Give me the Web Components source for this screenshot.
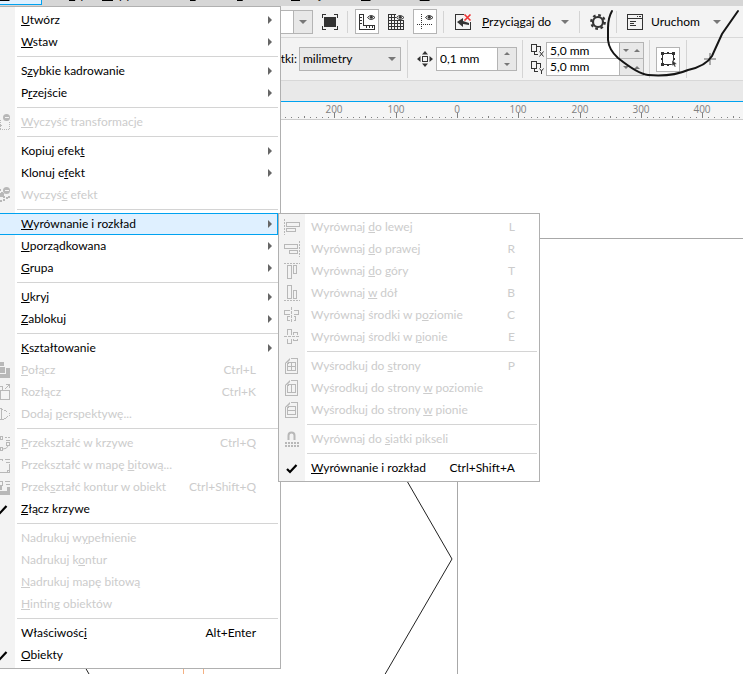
<!DOCTYPE html>
<html lang="pl">
<head>
<meta charset="utf-8">
<title>Wyrównanie i rozkład</title>
<style>
html, body { margin: 0; height: 100%; }
body { font: 12px/16px Lato, "Open Sans", "Noto Sans", sans-serif; color: #000; background: #fff; overflow: hidden; }
</style>
</head>
<body>
<app-window>
  <menu-bar slot="bars">
    <button class="open"><u>O</u>biekt</button><button style="width:50px">Efe<u>k</u>ty</button><button style="width:88px"><u>M</u>apy bitowe</button><button style="width:47px"><u>T</u>ekst</button><button style="width:54px"><u>T</u>abela</button><button style="width:70px"><u>N</u>arzędzia</button><button style="width:45px"><u>O</u>kno</button><button>Po<u>m</u>oc</button>
  </menu-bar>
  <standard-bar slot="bars"></standard-bar>
  <property-bar slot="bars"></property-bar>
  <tab-strip slot="bars"></tab-strip>
  <page-ruler slot="bars"></page-ruler>
  <drawing-area slot="page"></drawing-area>
  <drop-menu slot="menu">
    <menu-item arrow><u>U</u>twórz</menu-item>
    <menu-item arrow><u>W</u>staw</menu-item>
    <menu-line></menu-line>
    <menu-item arrow>S<u>z</u>ybkie kadrowanie</menu-item>
    <menu-item arrow>P<u>r</u>zejście</menu-item>
    <menu-line></menu-line>
    <menu-item off icon="clearTransform"><u>W</u>yczyść transformacje</menu-item>
    <menu-line></menu-line>
    <menu-item arrow>Kopiuj efek<u>t</u></menu-item>
    <menu-item arrow>Klonuj e<u>f</u>ekt</menu-item>
    <menu-item off icon="clearEffect">Wyczyś<u>ć</u> efekt</menu-item>
    <menu-line></menu-line>
    <menu-item arrow active><u>W</u>yrównanie i rozkład
      <drop-menu slot="submenu">
        <menu-item off icon="alignLeft" key="L">Wyrównaj <u>d</u>o lewej</menu-item>
        <menu-item off icon="alignRight" key="R">Wyrównaj <u>d</u>o prawej</menu-item>
        <menu-item off icon="alignTop" key="T">Wyrównaj <u>d</u>o góry</menu-item>
        <menu-item off icon="alignBottom" key="B">Wyrównaj <u>w</u> dół</menu-item>
        <menu-item off icon="centerH" key="C">Wyrównaj środki w p<u>o</u>ziomie</menu-item>
        <menu-item off icon="centerV" key="E">Wyrównaj środki w <u>p</u>ionie</menu-item>
        <menu-line></menu-line>
        <menu-item off icon="page" key="P">Wyśrodkuj do <u>s</u>trony</menu-item>
        <menu-item off icon="pageH">Wyśrodkuj do strony <u>w</u> poziomie</menu-item>
        <menu-item off icon="pageV">Wyśrodkuj do strony <u>w</u> pionie</menu-item>
        <menu-line></menu-line>
        <menu-item off icon="magnet">Wyrównaj do <u>s</u>iatki pikseli</menu-item>
        <menu-line></menu-line>
        <menu-item icon="check" key="Ctrl+Shift+A"><u>W</u>yrównanie i rozkład</menu-item>
      </drop-menu>
    </menu-item>
    <menu-item arrow><u>U</u>porządkowana</menu-item>
    <menu-item arrow><u>G</u>rupa</menu-item>
    <menu-line></menu-line>
    <menu-item arrow><u>U</u>kryj</menu-item>
    <menu-item arrow><u>Z</u>ablokuj</menu-item>
    <menu-line></menu-line>
    <menu-item arrow><u>K</u>ształtowanie</menu-item>
    <menu-item off icon="combine" key="Ctrl+L"><u>P</u>ołącz</menu-item>
    <menu-item off icon="split" key="Ctrl+K">Rozłącz</menu-item>
    <menu-item off icon="perspective">Dodaj <u>p</u>erspektywę...</menu-item>
    <menu-line></menu-line>
    <menu-item off icon="toCurve" key="Ctrl+Q"><u>P</u>rzekształć w krzywe</menu-item>
    <menu-item off icon="toBitmap">Przekształć w mapę <u>b</u>itową...</menu-item>
    <menu-item off icon="toObject" key="Ctrl+Shift+Q">Przek<u>s</u>ztałć kontur w obiekt</menu-item>
    <menu-item icon="check"><u>Z</u>łącz krzywe</menu-item>
    <menu-line></menu-line>
    <menu-item off>Nadrukuj w<u>y</u>pełnienie</menu-item>
    <menu-item off>Nadrukuj k<u>o</u>ntur</menu-item>
    <menu-item off><u>N</u>adrukuj mapę bitową</menu-item>
    <menu-item off><u>H</u>inting obiektów</menu-item>
    <menu-line></menu-line>
    <menu-item key="Alt+Enter">Właściwośc<u>i</u></menu-item>
    <menu-item icon="check"><u>O</u>biekty</menu-item>
  </drop-menu>
  <pen-mark slot="menu"></pen-mark>
</app-window>
<script>
const line = (d, extra = '') => `<path d="${d}" ${extra}/>`;
const eye = '<g shape-rendering="auto"><path d="M8.500 3.500q3.500-4 7.500 0q-4 4-7.500 0z" fill="#fff"/><circle cx="12.300" cy="3.300" r="1.500" fill="currentColor" stroke="none"/></g>';
const fold = '<path d="M1 5L6 0V2L3 5z" fill="currentColor" stroke="none" shape-rendering="auto"/>';
const pageBox = line('M1.500 4.500V15.500H13.500V.5H6.500M5.500 4.500H11.500V12.500H3.500V5.500z');
const ICONS = {
  alignLeft: line('M.5 0V16', 'stroke-dasharray="2 1"') + line('M2.500 3.500h13v4h-13zM2.500 9.500h9v3h-9z'),
  alignRight: line('M15.500 0V16', 'stroke-dasharray="2 1"') + line('M.5 3.500h13v4H.5zM5.500 9.500h8v3h-8z'),
  alignTop: line('M0 .5H16', 'stroke-dasharray="2 1"') + line('M3.500 2.500h4v13h-4zM9.500 2.500h3v8h-3z'),
  alignBottom: line('M0 15.500H16', 'stroke-dasharray="2 1"') + line('M3.500 .5h4v13h-4zM9.500 5.500h3v8h-3z'),
  centerH: line('M7.500 0V16', 'stroke-dasharray="3 1"') + line('M5.500 3.500H.5v4H5.500M9.500 3.500H14.500v4H9.500M5.500 9.500H3.500v4H5.500M9.500 9.500H11.500v4H9.500'),
  centerV: line('M0 7.500H16', 'stroke-dasharray="3 1"') + line('M3.500 5.500V.5h4V5.500M3.500 9.500V14.500h4V9.500M9.500 5.500V3.500h4V5.500M9.500 9.500V11.500h4V9.500'),
  page: pageBox + fold + line('M7.500 4V13M4 8.500H12'),
  pageH: pageBox + fold + line('M7.500 4V13'),
  pageV: pageBox + fold + line('M4 8.500H12'),
  magnet: line('M4.500 9V4.500a3 3 0 0 1 6 0V9', 'stroke-width="2" shape-rendering="auto"') + line('M1 11.500H15M1 14.500H15', 'stroke-width="2" stroke-dasharray="2 1"'),
  check: line('M3 9l3 3L12.500 5', 'stroke-width="2.200" shape-rendering="auto"'),
  clearTransform: '<circle cx="12.500" cy="3.500" r="3.500" fill="currentColor" stroke="none" shape-rendering="auto"/>' + line('M10.500 3.500h4', 'stroke="#f3f3f3"') + line('M0 6.500H6.500V15.500M15.500 8V15.500H6', 'stroke-dasharray="1 1"') + line('M6 11.500h2'),
  clearEffect: line('M6 2v3M6 8v2M8 5v4M10 9v6M13 10v3M7 13v3M15 9v2', 'stroke-width="2" stroke-dasharray="2 1"') + '<circle cx="12.500" cy="3.500" r="3.500" fill="currentColor" stroke="none" shape-rendering="auto"/><circle cx="8" cy="8" r="2.500" fill="currentColor" stroke="none"/>' + line('M10.500 3.500h4', 'stroke="#f3f3f3"'),
  combine: '<path d="M4 0h6v4H4zM4 5h7v6H4zM12 6h4v10H0v-4h12z" fill="currentColor" stroke="none"/>',
  split: line('M0 2.500H8.500V6M6.500 6.500V15.500H15.500V6.500zM0 11.500h6') + line('M11 5l4-4M12 .5h3.500V4'),
  perspective: line('M0 2.500H7.500V13.500H0') + line('M8 3l7 4V10L8 14', 'stroke-dasharray="1.500 1"'),
  toCurve: line('M6.500 1.500h2v3h-2zM12.500 7.500h3v3h-3zM6.500 12.500h2v3h-2z') + line('M14 11q-1 3-5 3M11 2.500h2M14 2.500h2M12 5.500h4', 'shape-rendering="auto"'),
  toBitmap: line('M6 2.500h2.500V4M6 15.500H15.500V7M11 2.500h5M12 5.500h4M13 15.500v-2h2'),
  toObject: line('M6 2.500h2.500V7M11 2.500h5M12 5.500h4') + '<path d="M6 12h6l1-1V8h3v8H6zM6 6h2v5H6z" fill="currentColor" stroke="none"/>',
  fullscreen: line('M.5 4V.5H4M12 .5H15.500V4M15.500 12V15.500H12M4 15.500H.5V12') + '<path d="M2 3h12v10H2z" fill="currentColor" stroke="none"/>',
  rulers: line('M.5 0V15.500H15.500V11.500H4.500V.5H1M1 3.500h2M1 6.500h2M1 9.500h2M7.500 12v2M10.500 12v2M13.500 12v2') + eye,
  grid: line('M.5 .5V15.500H15.500V.5zM3.500 0V16M6.500 0V16M9.500 0V16M12.500 0V16M0 3.500H16M0 6.500H16M0 9.500H16M0 12.500H16') + '<path d="M8 0h8v6H8z" fill="#f3f3f3" stroke="none"/>' + eye,
  guides: line('M4.500 0V16M0 10.500H16', 'stroke-dasharray="1 1"') + eye,
  snapOff: line('M9 .5H.5V15.500H15.500V8') + '<path d="M2 8l6-4v3l6 2v2l-6-1v3z" fill="currentColor" stroke="none" shape-rendering="auto"/>' + line('M9.500 .5l6 6M15.500 .5l-6 6', 'stroke="#e33" stroke-width="1.600" shape-rendering="auto"'),
  gear: '<g shape-rendering="auto"><circle cx="8" cy="8" r="5" stroke-width="2.200"/><circle cx="8" cy="8" r="6.800" stroke-width="2.200" stroke-dasharray="2.700 2.640"/></g>',
  launch: line('M.5 .5h15v15H.5zM0 4.500H16M3 7.500h6M3 9.500h4M3 11.500h6') + '<path d="M0 0h16v1H0zM10 2h1v1h-1zM12 2h2v1h-2z" fill="currentColor" stroke="none"/>',
  nudge: '<g fill="currentColor" stroke="none" shape-rendering="auto"><path d="M8 0l3 3.500H5zM8 16l3-3.500H5zM0 8l3.500-3v6zM16 8l-3.500-3v6z"/></g>' + line('M5.500 5.500h5v5h-5z', 'stroke-width="1.500"'),
  dupX: line('M.5 1.500h5v7h-5zM5.500 3.500H9.500v4M3.500 9v2.500H7') + line('M8.500 8.500l4 5M12.500 8.500l-4 5', 'shape-rendering="auto"'),
  dupY: line('M.5 1.500h5v7h-5zM5.500 3.500H9.500v4M3.500 9v2.500H7') + line('M8.500 8.500l2 2.500 2-2.500M10.500 11v3', 'shape-rendering="auto"'),
  bounds: line('M2.500 2.500h11v11h-11z', 'stroke-width="1"') + '<path d="M1 1h3v3H1zM12 1h3v3h-3zM1 12h3v3H1zM7 1h2v2H7zM7 13h2v2H7zM1 7h2v2H1zM13 7h2v2h-2z" fill="currentColor" stroke="none"/><path d="M12 9l5 4-2 .5 1 2.500h-1.500l-1-2-1.500 1z" fill="currentColor" stroke="#fff" stroke-width=".5" shape-rendering="auto"/>',
  plus: line('M8 2V14M2 8H14', 'stroke="#aaa" stroke-width="2"')
};

const define = (tag, css, html, setup) => {
  const t = document.createElement('template');
  t.innerHTML = `<style>*,:host{box-sizing:border-box}:host([hidden]){display:none}${css}</style>${html}`;
  customElements.define(tag, class extends HTMLElement {
    constructor() {
      super();
      this.attachShadow({ mode: 'open' }).append(t.content.cloneNode(true));
    }
    connectedCallback() {
      if (setup && !this.ready) { this.ready = true; setup(this, this.shadowRoot); }
    }
  });
};

define('ui-icon', ':host{display:block;flex:none;width:16px;height:16px}svg{display:block;overflow:visible}',
  '<svg width="16" height="16" viewBox="0 0 16 16" fill="none" stroke="currentColor" shape-rendering="crispEdges" aria-hidden="true"></svg>',
  (el, root) => { root.querySelector('svg').innerHTML = ICONS[el.getAttribute('name')] || ''; });

define('app-window', `
  :host{display:flex;flex-direction:column;position:relative;min-height:100vh;overflow:hidden;background:#fff}
  header{display:flex;flex-direction:column}
  main{flex:1;display:flex}
`, '<header><slot name="bars"></slot></header><main><slot name="page"></slot></main><slot name="menu"></slot>');

define('menu-bar', `
  :host{display:flex;align-items:flex-end;height:6px;padding-bottom:3px;overflow:hidden;background:#d6d6d6}
  ::slotted(button){font:inherit;line-height:16px;flex:none;border:0;padding:0;margin:0;background:none;text-align:left}
  ::slotted(.open){width:42px;margin-right:10px;margin-bottom:-2px;padding-bottom:1px;background:#dff0ff;border:solid #00a2f0;border-width:0 1px 1px 0}
`, '<slot></slot>');

const barCss = `
  :host{display:flex;align-items:center;background:#f3f3f3;border-bottom:1px solid #d8d8d8;color:#000}
  button{font:inherit;color:inherit;border:0;padding:0;margin:0;background:none;display:flex;align-items:center;justify-content:center;flex:none}
  ui-icon{color:#333}
  hr{border:0;margin:0;width:1px;background:#d4d4d4;flex:none}
  i{width:0;height:0;flex:none;border:4px solid transparent;border-top-color:#777;border-bottom:0}
  i.up{border:3px solid transparent;border-bottom-color:#777;border-top:0}
  i.down{border:3px solid transparent;border-top-color:#777;border-bottom:0}
  .box{width:24px;height:25px;background:#fff;border:1px solid #b4b4b4}
`;

define('standard-bar', barCss + `
  :host{height:32px;padding-left:241px}
  hr{height:22px}
  .combo{display:flex;width:72px;height:24px;border:1px solid #b4b4b4;background:#fff;justify-content:flex-end}
  .combo input{min-width:0;flex:1;border:0;padding:0}
  .combo button{width:19px;border-left:1px solid #b4b4b4;background:#e8e8e8}
`, `
  <div class="combo"><input aria-label="Powiększenie"><button aria-label="Lista powiększeń"><i></i></button></div>
  <button aria-label="Pełny ekran" style="width:34px"><ui-icon name="fullscreen"></ui-icon></button><hr>
  <button aria-label="Linijki" class="box" style="margin-left:7px"><ui-icon name="rulers"></ui-icon></button>
  <button aria-label="Siatka" style="width:34px"><ui-icon name="grid"></ui-icon></button>
  <button aria-label="Prowadnice" class="box"><ui-icon name="guides"></ui-icon></button>
  <hr style="margin-left:6px">
  <button aria-label="Wyłącz przyciąganie" style="width:38px"><ui-icon name="snapOff"></ui-icon></button>
  <button style="width:87px;justify-content:space-between"><span><u>P</u>rzyciągaj do</span><i></i></button>
  <hr style="margin-left:10px">
  <button aria-label="Opcje" style="width:36px"><ui-icon name="gear"></ui-icon></button><hr>
  <button style="margin-left:10px;width:94px"><ui-icon name="launch"></ui-icon><span style="flex:1;text-align:left;padding-left:8px">Uruchom</span><i></i></button>
`);

define('property-bar', barCss + `
  :host{height:43px;padding-left:241px}
  hr{height:38px}
  label{width:56px;text-align:right;flex:none}
  .pick{display:flex;align-items:center;width:102px;height:24px;margin:0 6px 0 2px;position:relative}
  select{appearance:none;font:inherit;color:inherit;width:100%;height:100%;border:1px solid #b4b4b4;border-radius:0;background:#e8e8e8;padding:0 3px}
  .pick i{position:absolute;right:5px}
  .num{display:flex;border:1px solid #b4b4b4;background:#e8e8e8}
  input{font:inherit;color:inherit;border:0;border-right:1px solid #b4b4b4;padding:0 3px;margin:0;width:62px;min-width:0;background:#fff}
  .spin{display:flex;flex-direction:column;width:18px}
  .spin button{flex:1}
  .pair{display:grid;grid-template-columns:15px 98px;align-items:center}
  .pair .num{height:17px}
  .pair .num + ui-icon + .num{border-top:0}
  .pair input{width:73px}
  .pair .num button{flex:1}
`, `
  <label for="unit">Jednostki:</label>
  <div class="pick"><select id="unit"><option>milimetry</option></select><i></i></div><hr>
  <ui-icon name="nudge" style="margin:0 3px 0 9px"></ui-icon>
  <div class="num" style="height:24px;width:81px"><input aria-label="Odległość przesunięcia" value="0,1 mm"><div class="spin"><button aria-label="Więcej"><i class="up"></i></button><button aria-label="Mniej"><i class="down"></i></button></div></div>
  <hr style="margin:0 8px 0 5px">
  <div class="pair">
    <ui-icon name="dupX"></ui-icon><div class="num"><input aria-label="Duplikat X" value="5,0 mm"><button aria-label="Mniej X"><i class="down"></i></button><button aria-label="Więcej X"><i class="up"></i></button></div>
    <ui-icon name="dupY"></ui-icon><div class="num"><input aria-label="Duplikat Y" value="5,0 mm"><button aria-label="Mniej Y"><i class="down"></i></button><button aria-label="Więcej Y"><i class="up"></i></button></div>
  </div>
  <hr style="margin:0 6px 0 5px">
  <button aria-label="Traktuj jako wypełnione" class="box"><ui-icon name="bounds"></ui-icon></button>
  <hr style="margin:0 15px 0 6px">
  <button aria-label="Dodaj"><ui-icon name="plus"></ui-icon></button>
`);

define('tab-strip', ':host{display:block;height:21px;background:#e9e9e9;border-bottom:1px solid #00a2f0}', '');

define('page-ruler', `
  :host{display:block;height:18px;background:#f5f5f5;border-bottom:1px solid #ccc}
  svg{display:block;width:100%;height:18px}
  text{font:10px "Open Sans","Noto Sans",sans-serif;fill:#808080;text-anchor:middle}
`, '<svg shape-rendering="crispEdges"></svg>', (el, root) => {
  const draw = () => {
    let out = '';
    for (let n = -29; 457 + n * 6.13 < el.clientWidth; n++) {
      const x = 457 + Math.round(n * 6.13);
      const h = n % 10 === 0 ? 5 : n % 5 === 0 ? 2 : 1;
      out += `<rect x="${x}" y="${16 - h}" width="1" height="${h}" fill="#808080"/>`;
      if (n % 10 === 0) out += `<text x="${x}" y="11">${Math.abs(n * 10)}</text>`;
    }
    root.querySelector('svg').innerHTML = out;
  };
  draw();
  addEventListener('resize', draw);
});

define('drawing-area', ':host{display:block;flex:1;background:#fff;overflow:hidden}svg{display:block;width:100%;height:100%}', `
  <svg fill="none" aria-hidden="true">
    <path d="M2000 118.500H457.500V2000" stroke="#a8a8a8" shape-rendering="crispEdges"/>
    <path d="M183.500 400V2000M203.500 400V2000" stroke="#f4b183" shape-rendering="crispEdges"/>
    <path d="M407 361L452 439L384 556M58 500L89 554" stroke="#222"/>
  </svg>`);

define('drop-menu', `
  :host{display:block;position:absolute;z-index:2;left:-12px;top:6px;width:293px;padding:2px 0;color:#000;
    border:1px solid #b0b0b0;background:linear-gradient(90deg,#f3f3f3 26px,#fff 26px)}
  :host([slot=submenu]){left:100%;top:0;width:262px}
`, '<slot></slot>');

define('menu-line', ':host{display:block;height:1px;margin:3px 2px 3px 28px;background:#d4d4d4}', '');

define('menu-item', `
  :host{display:block;position:relative;margin-right:2px}
  button{display:grid;grid-template-columns:26px 1fr auto 22px;align-items:center;width:100%;height:22px;border:0;padding:0;margin:0;
    background:none;font:inherit;color:inherit;text-align:left}
  :host([off]) button{color:#ccc}
  :host([active]) button{background:#dff0ff;box-shadow:inset 0 0 0 1px #00a2f0}
  ui-icon{margin-left:5px}
  :host([off]) ui-icon{color:#b8b8b8}
  .label{padding-left:6px;white-space:nowrap}
  .arrow{grid-column:4;width:0;height:0;margin-left:12px;border:4px solid transparent;border-left-color:#666;border-right:0}
  :host(:not([arrow])) .arrow{display:none}
`, '<button role="menuitem"><ui-icon></ui-icon><span class="label"><slot></slot></span><span class="key"></span><span class="arrow"></span></button><slot name="submenu"></slot>',
(el, root) => {
  root.querySelector('.key').textContent = el.getAttribute('key') || '';
  root.querySelector('button').disabled = el.hasAttribute('off');
  const icon = document.createElement('ui-icon');
  icon.setAttribute('name', el.getAttribute('icon') || '');
  root.querySelector('ui-icon').replaceWith(icon);
});

define('pen-mark', ':host{display:block;position:absolute;z-index:3;left:600px;top:0;pointer-events:none}svg{display:block}',
  '<svg width="143" height="80" fill="none" aria-hidden="true"><path d="M12 11Q8 18 8 28V40Q9 50 18 58Q38 74 48 75Q72 77 88 70Q106 66 112 56L122 34L138 11" stroke="#151515" stroke-width="2" stroke-linecap="round"/></svg>');
</script>
</body>
</html>
